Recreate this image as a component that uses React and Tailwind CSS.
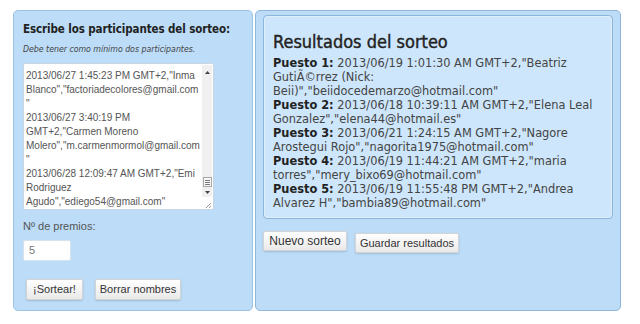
import React from "react";

const taLines = [
  ['2013/06/27 1:45:23 PM GMT+2,"Inma', 'Blanco","factoriadecolores@gmail.com', '"'],
  ['2013/06/27 3:40:19 PM', 'GMT+2,"Carmen Moreno', 'Molero","m.carmenmormol@gmail.com', '"'],
  ['2013/06/28 12:09:47 AM GMT+2,"Emi', 'Rodriguez', 'Agudo","ediego54@gmail.com"'],
];

const results = [
  ["Puesto 1:", ' 2013/06/19 1:01:30 AM GMT+2,"Beatriz', "GutiÃ©rrez (Nick:", 'Beii)","beiidocedemarzo@hotmail.com"'],
  ["Puesto 2:", ' 2013/06/18 10:39:11 AM GMT+2,"Elena Leal', 'Gonzalez","elena44@hotmail.es"'],
  ["Puesto 3:", ' 2013/06/21 1:24:15 AM GMT+2,"Nagore', 'Arostegui Rojo","nagorita1975@hotmail.com"'],
  ["Puesto 4:", ' 2013/06/19 11:44:21 AM GMT+2,"maria', 'torres","mery_bixo69@hotmail.com"'],
  ["Puesto 5:", ' 2013/06/19 11:55:48 PM GMT+2,"Andrea', 'Alvarez H","bambia89@hotmail.com"'],
];

function Btn({ children, className = "" }) {
  return (
    <div
      className={
        "flex items-center justify-center rounded-[2px] border border-[#d4d4d4] bg-gradient-to-b from-[#ffffff] to-[#e9e9e9] shadow-[0_1px_2px_rgba(0,0,0,0.15)] text-[#333] font-['Liberation_Sans',Arial,sans-serif] " +
        className
      }
    >
      {children}
    </div>
  );
}

export default function App() {
  return (
    <div className="w-[640px] h-[324px] bg-white flex pl-[13px] pt-[10px] gap-[2px]">
      {/* Left panel */}
      <div className="w-[240px] h-[301px] rounded-[5px] border border-[#9cc2e4] bg-[#bcdcf8] flex flex-col pl-[9px]">
        <div className="mt-[10px] text-[11.5px] leading-[16px] tracking-[-0.1px] font-bold text-[#222] whitespace-nowrap font-['DejaVu_Sans_Condensed','DejaVu_Sans',sans-serif]">
          Escribe los participantes del sorteo:
        </div>
        <div className="mt-[6px] text-[8.7px] leading-[12px] italic text-[#444] whitespace-nowrap font-['DejaVu_Sans_Condensed','DejaVu_Sans',sans-serif]">
          Debe tener como mínimo dos participantes.
        </div>
        <div className="mt-[8px] w-[191px] h-[147px] bg-white border border-[#c9d6e2] rounded-[2px] flex">
          <div className="flex-1 pl-[2px] pt-[5px] text-[10px] leading-[14px] text-[#555] font-['Liberation_Sans',Arial,sans-serif] overflow-hidden">
            {taLines.map((g, i) =>
              g.map((l, j) => (
                <div key={i + "-" + j} className="whitespace-nowrap">
                  {l}
                </div>
              ))
            )}
          </div>
          <div className="w-[10px] flex flex-col mr-[1px]">
            <div className="mt-[1px] flex-1 bg-[#f0f0f0] flex flex-col items-center">
              <svg width="7" height="10" viewBox="0 0 7 10" className="mt-[3px]">
                <path d="M1 6 L3.5 3 L6 6 Z" fill="#444" />
              </svg>
              <div className="flex-1" />
              <div className="w-[9px] h-[10px] border border-[#a8a8a8] bg-[#f7f7f7] flex flex-col items-center justify-center gap-[1px]">
                <div className="w-[5px] h-[1px] bg-[#777]" />
                <div className="w-[5px] h-[1px] bg-[#777]" />
                <div className="w-[5px] h-[1px] bg-[#777]" />
              </div>
              <svg width="7" height="8" viewBox="0 0 7 8" className="mt-[1px] mb-[1px]">
                <path d="M1 3 L3.5 6 L6 3 Z" fill="#444" />
              </svg>
            </div>
            <div className="h-[12px] flex items-end justify-end">
              <svg width="8" height="8" viewBox="0 0 8 8">
                <path d="M7 2 L2 7 M7 5 L5 7" stroke="#999" strokeWidth="1" />
              </svg>
            </div>
          </div>
        </div>
        <div className="mt-[9px] text-[11px] leading-[14px] text-[#555] font-['Liberation_Sans',Arial,sans-serif]">
          Nº de premios:
        </div>
        <div className="mt-[7px] w-[48px] h-[21px] bg-white border border-[#d6e2ec] rounded-[2px] flex items-center pl-[5px] text-[11px] text-[#777] font-['Liberation_Sans',Arial,sans-serif]">
          5
        </div>
        <div className="mt-[18px] ml-[3px] flex gap-[12px]">
          <Btn className="w-[57px] h-[21px] text-[11px]">¡Sortear!</Btn>
          <Btn className="w-[86px] h-[21px] text-[11px]">Borrar nombres</Btn>
        </div>
      </div>

      {/* Right panel */}
      <div className="w-[366px] h-[301px] rounded-[5px] border border-[#8fb5d8] bg-[#bcdcf8] flex flex-col px-[7px] pt-[4px]">
        <div className="w-[350px] h-[204px] rounded-[4px] border border-[#8db6dc] bg-[#cde6fb] shadow-[inset_0_0_0_1px_rgba(255,255,255,0.35)] pl-[9px] pt-[15px]">
          <div className="text-[18px] leading-[22px] text-[#222] [-webkit-text-stroke:0.4px_#222] font-['DejaVu_Sans_Condensed','DejaVu_Sans',sans-serif]">
            Resultados del sorteo
          </div>
          <div className="mt-[3px] text-[11.4px] leading-[14px] text-[#444] font-['DejaVu_Sans',Verdana,sans-serif]">
            {results.map((r, i) => (
              <div key={i}>
                <div className="whitespace-nowrap">
                  <span className="font-bold text-[#222]">{r[0]}</span>
                  {r[1]}
                </div>
                {r.slice(2).map((l, j) => (
                  <div key={j} className="whitespace-nowrap">
                    {l}
                  </div>
                ))}
              </div>
            ))}
          </div>
        </div>
        <div className="mt-[12px] flex items-start gap-[8px]">
          <Btn className="w-[84px] h-[20px] text-[12px]">Nuevo sorteo</Btn>
          <Btn className="mt-[2px] w-[104px] h-[20px] text-[11px]">Guardar resultados</Btn>
        </div>
      </div>
    </div>
  );
}
